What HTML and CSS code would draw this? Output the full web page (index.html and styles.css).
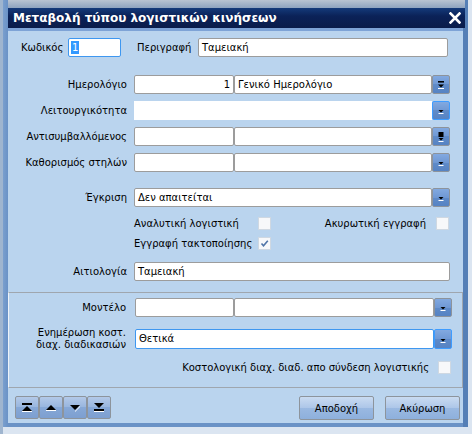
FILE: index.html
```html
<!DOCTYPE html>
<html lang="el">
<head>
<meta charset="utf-8">
<title>Μεταβολή τύπου λογιστικών κινήσεων</title>
<link rel="stylesheet" href="styles.css">
</head>
<body>
<div class="window">
  <div class="frametop"></div>
  <div class="titlebar">
    <span class="title">Μεταβολή τύπου λογιστικών κινήσεων</span>
    <svg class="close" width="12" height="12" viewBox="0 0 12 12"><path d="M1.5 1.5 L10.5 10.5 M10.5 1.5 L1.5 10.5" stroke="#fff" stroke-width="2.6" stroke-linecap="square"/></svg>
  </div>
  <div class="titleline"></div>
  <div class="content">
    <div class="toprow">
      <span class="toplbl">Κωδικός</span>
      <div class="f code focus"><span class="sel">1</span></div>
      <span class="toplbl desc-lbl">Περιγραφή</span>
      <div class="f desc">Ταμειακή</div>
    </div>

    <div class="row r-first">
      <span class="lbl">Ημερολόγιο</span>
      <div class="f f1 num">1</div>
      <div class="f f2">Γενικό Ημερολόγιο</div>
      <div class="dd"><svg width="16" height="17" viewBox="0 0 16 17"><rect x="5" y="5" width="6" height="1.6" fill="#000"/><polygon points="5,8.5 11,8.5 8,11.5" fill="#000"/><rect x="5" y="12" width="6" height="1" fill="#fff"/></svg></div>
    </div>
    <div class="row">
      <span class="lbl">Λειτουργικότητα</span>
      <div class="f fwide plain"></div>
      <div class="dd focus"><svg width="16" height="17" viewBox="0 0 16 17"><polygon points="5.5,8 10.5,8 8,10.5" fill="#000"/><rect x="5.5" y="11" width="5" height="1" fill="#fff"/></svg></div>
    </div>
    <div class="row">
      <span class="lbl">Αντισυμβαλλόμενος</span>
      <div class="f f1"></div>
      <div class="f f2"></div>
      <div class="dd"><svg width="16" height="17" viewBox="0 0 16 17"><rect x="5.5" y="4" width="5" height="5" fill="#000"/><polygon points="5.5,10 10.5,10 8,12.5" fill="#000"/><rect x="5.5" y="13" width="5" height="1" fill="#fff"/></svg></div>
    </div>
    <div class="row">
      <span class="lbl">Καθορισμός στηλών</span>
      <div class="f f1"></div>
      <div class="f f2"></div>
      <div class="dd"><svg width="16" height="17" viewBox="0 0 16 17"><polygon points="5.5,8 10.5,8 8,10.5" fill="#000"/><rect x="5.5" y="11" width="5" height="1" fill="#fff"/></svg></div>
    </div>
    <div class="row r-appr">
      <span class="lbl">Έγκριση</span>
      <div class="f fwide">Δεν απαιτείται</div>
      <div class="dd"><svg width="16" height="17" viewBox="0 0 16 17"><polygon points="5.5,8 10.5,8 8,10.5" fill="#000"/><rect x="5.5" y="11" width="5" height="1" fill="#fff"/></svg></div>
    </div>
    <div class="crow c-first">
      <span class="ctext c1">Αναλυτική λογιστική</span>
      <span class="cb"></span>
      <span class="ctext c2">Ακυρωτική εγγραφή</span>
      <span class="cb"></span>
    </div>
    <div class="crow c-second">
      <span class="ctext c1">Εγγραφή τακτοποίησης</span>
      <span class="cb"><svg width="11" height="11" viewBox="0 0 11 11"><path d="M2.5 5.5 L4.5 7.8 L8.8 2.8" fill="none" stroke="#4f74a8" stroke-width="1.6"/></svg></span>
    </div>
    <div class="row r-reason">
      <span class="lbl">Αιτιολογία</span>
      <div class="f freason">Ταμειακή</div>
    </div>

    <div class="group">
      <div class="row g-row">
        <span class="lbl glbl">Μοντέλο</span>
        <div class="f g1"></div>
        <div class="f g2"></div>
        <div class="dd"><svg width="16" height="17" viewBox="0 0 16 17"><polygon points="5.5,8 10.5,8 8,10.5" fill="#000"/><rect x="5.5" y="11" width="5" height="1" fill="#fff"/></svg></div>
      </div>
      <div class="row g-row g-upd">
        <span class="lbl glbl two">Ενημέρωση κοστ.<br>διαχ. διαδικασιών</span>
        <div class="f gwide focus">Θετικά</div>
        <div class="dd focus"><svg width="16" height="17" viewBox="0 0 16 17"><polygon points="5.5,8 10.5,8 8,10.5" fill="#000"/><rect x="5.5" y="11" width="5" height="1" fill="#fff"/></svg></div>
      </div>
      <div class="crow g-check">
        <span class="ctext">Κοστολογική διαχ. διαδ. απο σύνδεση λογιστικής</span>
        <span class="cb"></span>
      </div>
    </div>

    <div class="footer">
      <div class="nav">
        <button class="navbtn" type="button"><svg width="22" height="21" viewBox="0 0 22 21"><rect x="6" y="6" width="10" height="2" fill="#000"/><polygon points="6,14 16,14 11,9" fill="#000"/><rect x="6" y="14" width="10" height="1" fill="#fff"/></svg></button>
        <button class="navbtn" type="button"><svg width="22" height="21" viewBox="0 0 22 21"><polygon points="6,13 16,13 11,8" fill="#000"/><rect x="6" y="13" width="10" height="1" fill="#fff"/></svg></button>
        <button class="navbtn" type="button"><svg width="22" height="21" viewBox="0 0 22 21"><polygon points="6,8 16,8 11,13" fill="#000"/><polygon points="11,14 16,9 16,10 11,15" fill="#fff"/></svg></button>
        <button class="navbtn" type="button"><svg width="22" height="21" viewBox="0 0 22 21"><polygon points="6,6 16,6 11,11" fill="#000"/><rect x="6" y="12" width="10" height="2" fill="#000"/><rect x="6" y="14" width="10" height="1" fill="#fff"/></svg></button>
      </div>
      <div class="actions">
        <button class="btn" type="button">Αποδοχή</button>
        <button class="btn" type="button">Ακύρωση</button>
      </div>
    </div>
  </div>
</div>
</body>
</html>
```
FILE: styles.css
```css
html, body {
  margin: 0;
  padding: 0;
}
body {
  width: 472px;
  height: 434px;
  overflow: hidden;
  background: linear-gradient(to right, #9fb5cf 0 3px, #dbe5f1 3px);
  font-family: "DejaVu Sans", Verdana, sans-serif;
  font-size: 10px;
  color: #000;
}
.window {
  width: 465px;
  height: 427px;
  margin-left: 3px;
  box-sizing: border-box;
  padding: 0 5px 4px 5px;
  background: linear-gradient(to right, #7a9fce, #6a92c6 5px, #6a92c6 460px, #557fb6 460px);
  display: flex;
  flex-direction: column;
}
.frametop {
  height: 8px;
  margin-right: -2px;
  background: linear-gradient(#b9c4d2, #8ea3bf);
}
.titlebar {
  height: 20px;
  margin-right: -2px;
  background: linear-gradient(#143a7a, #0b2258 40%, #0a1c4a);
  display: flex;
  align-items: center;
  justify-content: space-between;
  padding: 0 4px 0 5px;
}
.title {
  color: #fff;
  font-weight: bold;
  font-size: 12px;
}
.close {
  display: block;
}
.titleline {
  height: 3px;
  background: #7ea3d6;
}
.content {
  flex: 1;
  background: #bad4ee;
  display: flex;
  flex-direction: column;
}
.toprow {
  display: flex;
  align-items: center;
  height: 19px;
  margin-top: 7px;
  padding-left: 13px;
}
.toplbl {
  width: 47px;
  white-space: nowrap;
}
.desc-lbl {
  width: auto;
  margin-left: 16px;
  margin-right: 5px;
}
.f {
  height: 19px;
  box-sizing: border-box;
  border: 1px solid #9c9c9c;
  border-radius: 2px;
  background: #fff;
  padding: 0 3px;
  line-height: 17px;
  white-space: nowrap;
  overflow: hidden;
}
.f.focus {
  border-color: #3e97f0;
}
.code {
  width: 53px;
  padding-left: 2px;
}
.sel {
  background: #3399ff;
  color: #fff;
  display: inline-block;
  line-height: 13px;
  padding: 0 1px;
}
.desc {
  width: 250px;
  margin-left: auto;
  margin-right: 15px;
}
.row {
  display: flex;
  align-items: center;
  height: 19px;
  margin-top: 7px;
}
.r-first {
  margin-top: 18px;
}
.r-appr {
  margin-top: 16px;
}
.r-reason {
  margin-top: 12px;
}
.lbl {
  width: 126px;
  box-sizing: border-box;
  padding-right: 7px;
  text-align: right;
  white-space: nowrap;
}
.f1 {
  width: 100px;
}
.f2 {
  width: 198px;
}
.num {
  text-align: right;
}
.fwide {
  width: 298px;
}
.plain {
  border-color: #fff;
  border-radius: 0;
}
.freason {
  width: 316px;
}
.dd {
  width: 18px;
  height: 19px;
  box-sizing: border-box;
  border: 1px solid #8d939b;
  border-radius: 2px;
  background: linear-gradient(#82a9e0, #6f98d4 50%, #5f8bc9 50%, #5683c3);
  display: flex;
  align-items: center;
  justify-content: center;
}
.dd.focus {
  border-color: #3e9cff;
}
.dd svg {
  display: block;
}
.crow {
  display: flex;
  align-items: center;
  height: 13px;
  padding-right: 14px;
}
.c-first {
  margin-top: 10px;
}
.c-second {
  margin-top: 7px;
}
.ctext {
  white-space: nowrap;
}
.c1 {
  margin-left: 126px;
  width: 124px;
}
.c2 {
  margin-left: auto;
  margin-right: 10px;
}
.cb {
  width: 13px;
  height: 13px;
  box-sizing: border-box;
  border: 1px solid #cfd8e2;
  background: #f7f8fa;
  display: flex;
  align-items: center;
  justify-content: center;
}
.group {
  margin-top: 11px;
  border: 1px solid #9fa6ae;
  border-left-color: #eef3f8;
  padding: 5px 0 12px 0;
  height: 96px;
  box-sizing: border-box;
}
.g-row {
  margin-top: 0;
}
.g-upd {
  margin-top: 12px;
  height: 20px;
}
.glbl {
  width: 126px;
  padding-right: 9px;
}
.two {
  line-height: 12px;
  white-space: nowrap;
}
.g1 {
  width: 99px;
}
.g2 {
  width: 200px;
}
.gwide {
  width: 299px;
  height: 20px;
  line-height: 18px;
}
.g-upd .dd {
  height: 20px;
}
.g-check {
  margin-top: 12px;
  justify-content: flex-end;
  padding-right: 11px;
}
.g-check .cb {
  margin-left: 9px;
}
.footer {
  flex: 1;
  display: flex;
  align-items: flex-start;
  justify-content: space-between;
  padding: 8px 3px 0 7px;
}
.nav {
  display: flex;
}
.navbtn {
  width: 24px;
  height: 23px;
  padding: 0;
  margin: 0;
  box-sizing: border-box;
  border: 1px solid #8d949c;
  border-radius: 2px;
  background: linear-gradient(#b3c9e8, #97b5de 50%, #86a8d7 50%, #7d9fd0);
  display: flex;
  align-items: center;
  justify-content: center;
}
.navbtn svg {
  display: block;
}
.actions {
  display: flex;
  gap: 11px;
}
.btn {
  width: 75px;
  height: 24px;
  margin: 0;
  padding: 0;
  box-sizing: border-box;
  border: 1px solid #8d949c;
  border-radius: 2px;
  background: linear-gradient(#c9dbf1, #adc6e8 50%, #9ab9e2 50%, #8eb0dc);
  font-family: "DejaVu Sans", Verdana, sans-serif;
  font-size: 10px;
  color: #000;
}
```
